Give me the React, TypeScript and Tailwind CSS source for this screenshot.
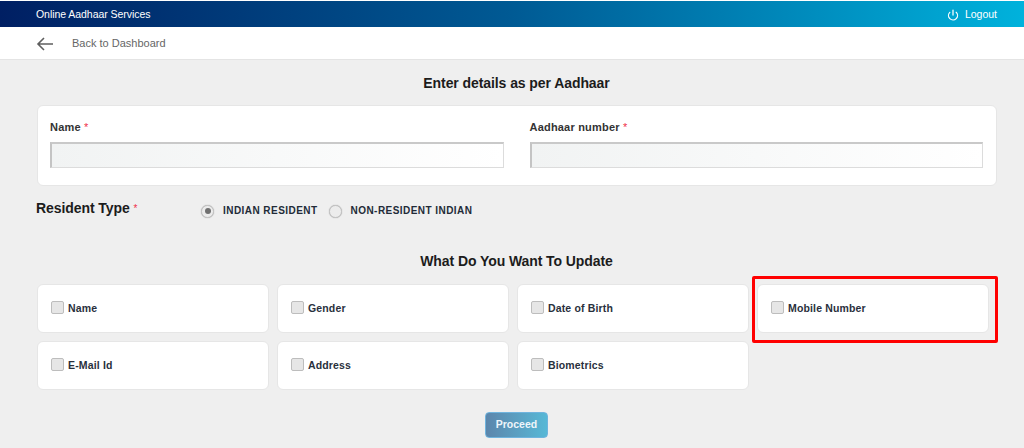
import React from "react";
import { Power } from "lucide-react";

const font = "font-['Liberation_Sans',Arial,sans-serif]";

const updateOptions = [
  "Name",
  "Gender",
  "Date of Birth",
  "Mobile Number",
  "E-Mail Id",
  "Address",
  "Biometrics",
];

function DetailField({ label }: { label: string }) {
  return (
    <div className="flex-1">
      <div className="h-[14px] text-[11px] leading-[14px] font-bold tracking-[0.2px] text-[#333333]">
        {label} <span className="text-[#f0304a] font-normal">*</span>
      </div>
      <div className="mt-[8px] h-[26px] border border-[#dcdcdc] border-t-2 border-l-2 border-t-[#c9c9c9] border-l-[#c4c4c4] bg-gradient-to-r from-[#f1f3f3] to-white" />
    </div>
  );
}

function Radio({ label, checked }: { label: string; checked?: boolean }) {
  return (
    <div className="flex items-center gap-[9px]">
      <span className="flex h-[13px] w-[13px] items-center justify-center rounded-full border border-[#c4c4c4] bg-[#ececec] shadow-[0_0_1px_#999]">
        {checked && <span className="h-[6px] w-[6px] rounded-full bg-[#707070]" />}
      </span>
      <span className="text-[10px] leading-[14px] font-bold tracking-[0.45px] text-[#222b38]">{label}</span>
    </div>
  );
}

function OptionCard({ label }: { label: string }) {
  const highlighted = label === "Mobile Number";
  return (
    <div className="relative flex h-[49px] items-center gap-[4px] rounded-[6px] border border-[#e6e6e6] bg-white pb-[2px] pl-[13px]">
      <span className="h-[13px] w-[13px] rounded-[2px] border border-[#bdbdbd] bg-[#e6e6e6]" />
      <span className="text-[10.5px] leading-[14px] font-bold tracking-[0.15px] text-[#29303c]">{label}</span>
      {highlighted && (
        <div className="absolute -top-[9px] -left-[6px] h-[67px] w-[246px] rounded-[2px] border-[3px] border-[#ff0000] shadow-[0_0_1px_#ffffff]" />
      )}
    </div>
  );
}

export default function App() {
  return (
    <div className={`${font} h-[448px] w-[1024px] overflow-hidden bg-[#efefef]`}>
      {/* Top bar */}
      <div className="border-t border-white bg-white">
        <div className="flex h-[26px] items-center justify-between bg-gradient-to-r from-[#001f63] via-[#005a94] to-[#00b2dc] pt-[1px] pr-[27px] pl-[36px] text-white">
          <span className="text-[10.5px] tracking-[-0.05px]">Online Aadhaar Services</span>
          <div className="flex items-center gap-[6px] text-[10.5px]">
            <Power size={12} strokeWidth={2.5} />
            <span>Logout</span>
          </div>
        </div>
      </div>

      {/* Back link */}
      <div className="flex h-[33px] items-center border-b border-[#e4e4e4] bg-white pt-[1px] pl-[36px]">
        <svg width="18" height="14" viewBox="0 0 18 14" fill="none" stroke="#5f5f5f" strokeWidth="1.6">
          <path d="M17 7H2M8 1L2 7l6 6" />
        </svg>
        <span className="ml-[18px] text-[11px] text-[#666666]">Back to Dashboard</span>
      </div>

      <h2 className="mt-[15px] pl-[9px] text-center text-[14px] leading-[16px] font-bold tracking-[-0.08px] text-[#1c1c1c]">
        Enter details as per Aadhaar
      </h2>

      {/* Details card */}
      <div className="mx-[37px] mt-[14px] flex h-[81px] w-[960px] gap-[26px] rounded-[6px] border border-[#e6e6e6] bg-white pt-[14px] pr-[13px] pl-[12px]">
        <DetailField label="Name" />
        <DetailField label="Aadhaar number" />
      </div>

      {/* Resident type */}
      <div className="mt-[14px] flex items-start pl-[36px]">
        <div className="w-[165px] text-[14px] leading-[16px] font-bold tracking-[-0.08px] text-[#1c1c1c]">
          Resident Type <span className="align-middle text-[10px] font-normal text-[#f0304a]">*</span>
        </div>
        <div className="mt-[4px] flex items-center gap-[11px]">
          <Radio label="INDIAN RESIDENT" checked />
          <Radio label="NON-RESIDENT INDIAN" />
        </div>
      </div>

      <h2 className="mt-[35px] pl-[9px] text-center text-[14px] leading-[16px] font-bold tracking-[-0.08px] text-[#1c1c1c]">
        What Do You Want To Update
      </h2>

      {/* Update options */}
      <div className="mt-[15px] ml-[37px] grid w-[952px] grid-cols-4 gap-x-[8px] gap-y-[8px]">
        {updateOptions.map((option) => (
          <OptionCard key={option} label={option} />
        ))}
      </div>

      <div className="mt-[22px] flex justify-center pl-[9px]">
        <button className="h-[26px] w-[63px] rounded-[4px] border border-[#6fb4de] bg-gradient-to-r from-[#5b86ac] to-[#56b8d6] text-[10.5px] font-bold text-[#eef5fa]">
          Proceed
        </button>
      </div>
    </div>
  );
}
